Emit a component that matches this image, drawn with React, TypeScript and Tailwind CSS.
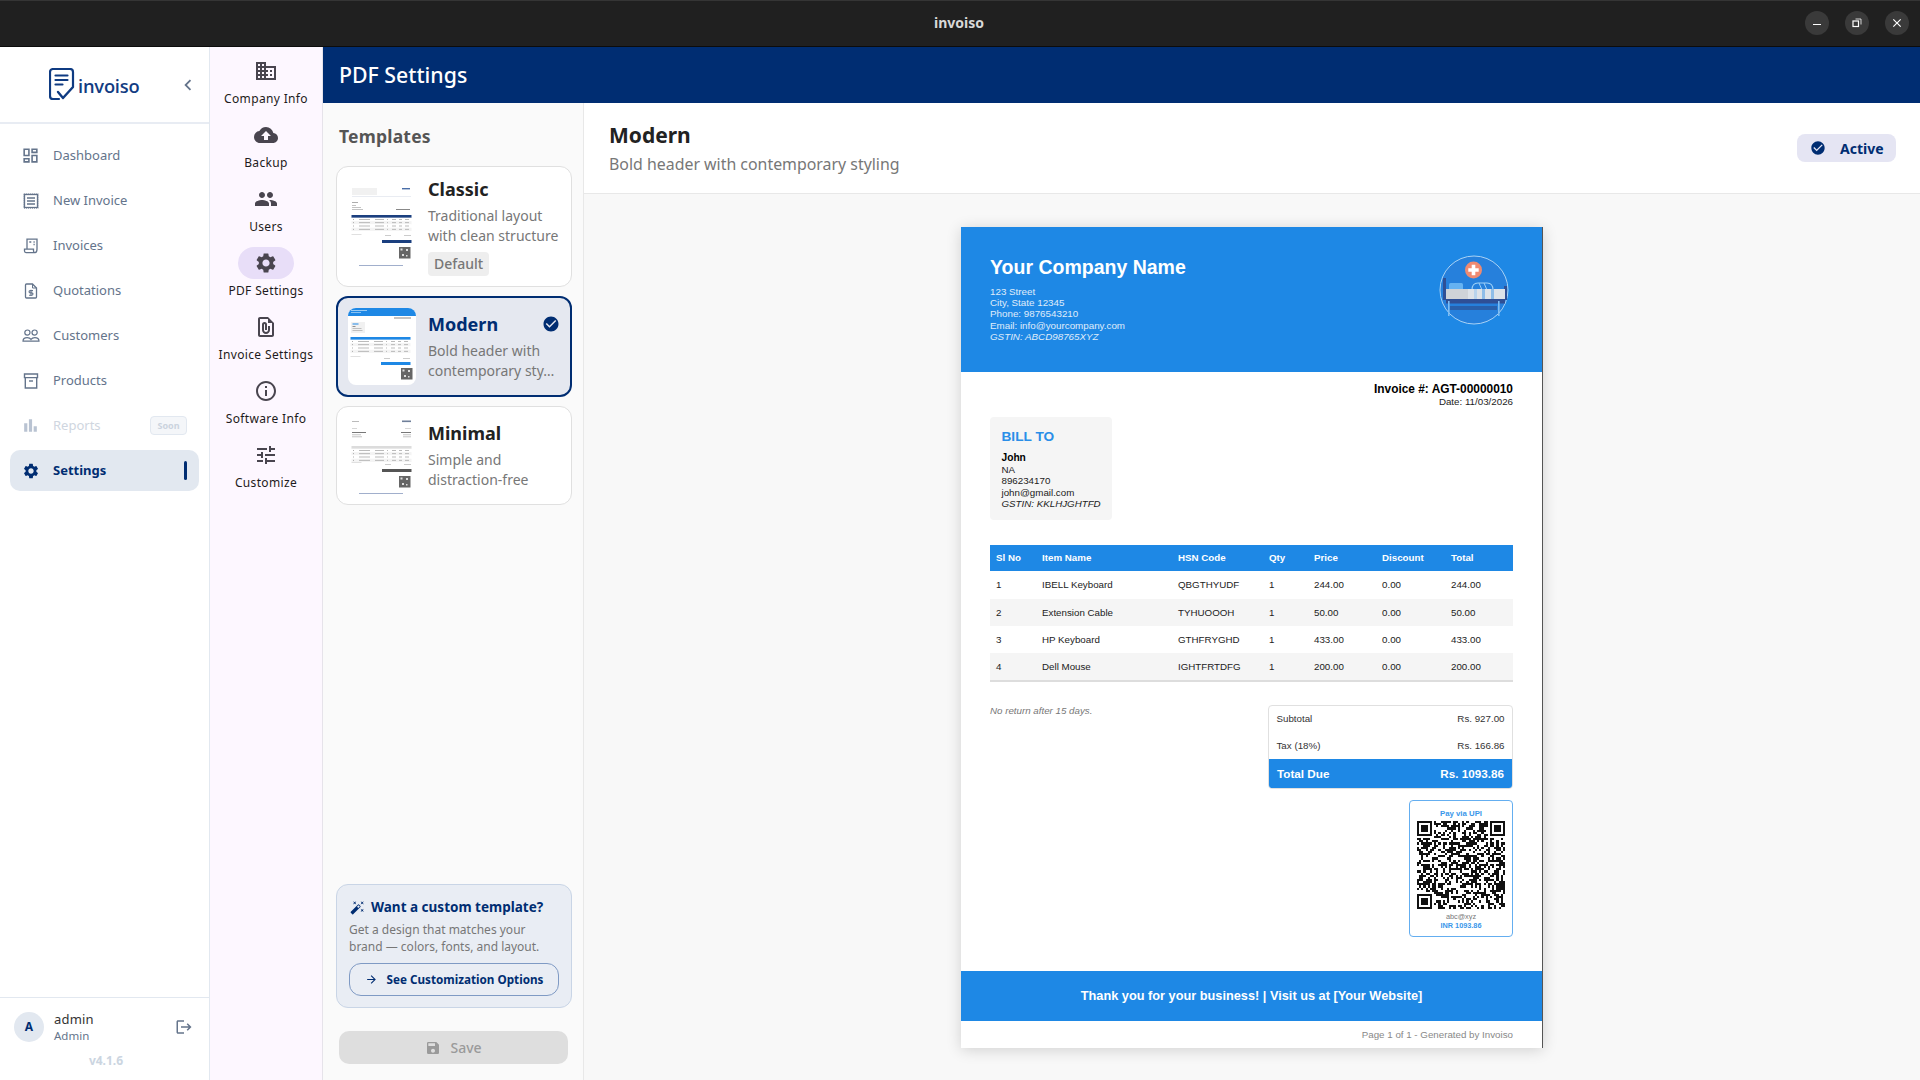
import React from "react";
import {
  MdOutlineDashboard, MdBarChart, MdSettings, MdBusiness, MdCloudUpload, MdPeople,
  MdOutlineFilePresent, MdInfoOutline, MdTune, MdCheckCircle, MdAutoFixHigh, MdSave, MdLogout, MdChevronLeft,
  MdArrowForward, MdClose,
} from "react-icons/md";

const ui = { fontFamily: '"Noto Sans", sans-serif' };
const pdf = { fontFamily: '"Liberation Sans", Arial, sans-serif' };

function IconNewInvoice() {
  return (
    <svg width="16" height="16" viewBox="0 0 16 16" fill="none" stroke="currentColor">
      <rect x="1.5" y="1.5" width="13" height="13" strokeWidth="1.3" />
      <rect x="0.8" y="0.8" width="14.4" height="14.4" strokeWidth="0.8" strokeDasharray="1 1" />
      <path d="M4 5h8M4 8h8M4 11h8" strokeWidth="1.3" />
    </svg>
  );
}
function IconInvoices() {
  return (
    <svg width="16" height="16" viewBox="0 0 16 16" fill="none" stroke="currentColor" strokeWidth="1.3">
      <path d="M4 11V1.2h10V11" />
      <path d="M1.5 11.2h9v1.8a1.6 1.6 0 0 0 1.6 1.6H3a1.6 1.6 0 0 1-1.5-1.6z" />
      <path d="M14 11c0 2.2-.6 3.6-2 3.6" />
      <path d="M6.3 4h2M10.5 4h1.2M10.5 6.5h1.2" />
    </svg>
  );
}
function IconQuote() {
  return (
    <svg width="16" height="16" viewBox="0 0 16 16" fill="none" stroke="currentColor" strokeWidth="1.3">
      <path d="M2.5 2a1 1 0 0 1 1-1h6l4 4v9a1 1 0 0 1-1 1h-9a1 1 0 0 1-1-1z" />
      <path d="M9.5 1v4h4" strokeWidth="1" />
      <path d="M10 7.6H7.2a1.1 1.1 0 0 0 0 2.3h1.6a1.1 1.1 0 0 1 0 2.3H6M8 6.8v6.2" strokeWidth="1.1" />
    </svg>
  );
}
function IconCustomers() {
  return (
    <svg width="18" height="16" viewBox="0 0 18 16" fill="none" stroke="currentColor" strokeWidth="1.2">
      <circle cx="5.4" cy="4.6" r="2.6" />
      <circle cx="12.6" cy="4.6" r="2.6" />
      <path d="M1 13.2c0-2.4 2-3.6 4.2-3.6 1.5 0 3 .6 3.8 1.8.8-1.2 2.3-1.8 3.8-1.8 2.2 0 4.2 1.2 4.2 3.6z" />
    </svg>
  );
}
function IconProducts() {
  return (
    <svg width="16" height="16" viewBox="0 0 16 16" fill="none" stroke="currentColor" strokeWidth="1.4">
      <path d="M1.5 1h13v3.6h-13z" />
      <path d="M2.3 4.6V15h11.4V4.6" />
      <path d="M6 8h4" />
    </svg>
  );
}
function Logo() {
  return (
    <svg width="26" height="33" viewBox="0 0 26 33" fill="none" stroke="#0f3b82" strokeWidth="2.2" strokeLinecap="round" strokeLinejoin="round">
      <path d="M10 31H4a3 3 0 0 1-3-3V4a3 3 0 0 1 3-3h17a3 3 0 0 1 3 3v14" />
      <path d="M6.5 7.5h12M6.5 12h12M6.5 16.5h7" />
      <path d="M9 24l5 6 10-11" strokeWidth="2.4" />
    </svg>
  );
}

const navItems: { label: string; icon: React.ReactNode }[] = [
  { label: "Dashboard", icon: <MdOutlineDashboard size={19} /> },
  { label: "New Invoice", icon: <IconNewInvoice /> },
  { label: "Invoices", icon: <IconInvoices /> },
  { label: "Quotations", icon: <IconQuote /> },
  { label: "Customers", icon: <IconCustomers /> },
  { label: "Products", icon: <IconProducts /> },
];

function Sidebar() {
  return (
    <aside className="w-[210px] shrink-0 bg-white border-r border-[#e2e8f0] flex flex-col h-full">
      <div className="h-[77px] shrink-0 border-b-2 border-[#e8ecf3] flex items-center pl-[49px] pr-[10px]">
        <Logo />
        <span className="ml-[3px] text-[18.3px] font-semibold tracking-[-0.2px] text-[#123c82] leading-none mt-[3px]" style={{ fontFamily: '"Open Sans", sans-serif' }}>invoiso</span>
        <MdChevronLeft size={22} className="ml-auto text-[#64748b]" />
      </div>
      <nav className="flex flex-col gap-[4px] pt-[11px] px-[10px]">
        {navItems.map((n) => (
          <div key={n.label} className="h-[41px] flex items-center text-[#64748b]">
            <span className="w-[43px] flex justify-center pr-[2px] text-[#64748b]">{n.icon}</span>
            <span className="text-[13px]">{n.label}</span>
          </div>
        ))}
        <div className="h-[41px] flex items-center text-[#64748b]">
          <span className="w-[43px] flex justify-center pr-[2px] text-[#b9c3d2]"><MdBarChart size={19} /></span>
          <span className="text-[13px] text-[#cfd6e0]">Reports</span>
          <span className="ml-auto mr-[12px] w-[37px] h-[19px] rounded-[4px] border border-[#e2e8f0] bg-[#f4f6f9] text-[#cbd3de] text-[9px] font-bold flex items-center justify-center">Soon</span>
        </div>
        <div className="h-[41px] flex items-center rounded-[10px] bg-[#e2e8f0] text-[#002d72]">
          <span className="w-[43px] flex justify-center pr-[2px]"><MdSettings size={18} /></span>
          <span className="text-[13px] font-bold">Settings</span>
          <span className="ml-auto mr-[12px] w-[3px] h-[19px] rounded-full bg-[#002d72]" />
        </div>
      </nav>
      <div className="mt-auto border-t border-[#e2e8f0] h-[83px] shrink-0 flex flex-col">
        <div className="flex items-center pt-[12px] pl-[14px] pr-[16px]">
          <span className="w-[30px] h-[30px] rounded-full bg-[#e2e8f0] flex items-center justify-center text-[#002d72] text-[12px] font-bold">A</span>
          <div className="ml-[10px] flex flex-col">
            <span className="text-[13px] leading-[18px] text-[#333] tracking-[0.2px]">admin</span>
            <span className="text-[11.5px] leading-[16px] text-[#64748b]">Admin</span>
          </div>
          <MdLogout size={18} className="ml-auto text-[#64748b]" />
        </div>
        <div className="text-center text-[12px] font-bold text-[#cbd5e1] pt-[8px] pl-[3px]">v4.1.6</div>
      </div>
    </aside>
  );
}

const railItems: { label: string; icon: React.ReactNode; active?: boolean }[] = [
  { label: "Company Info", icon: <MdBusiness size={24} /> },
  { label: "Backup", icon: <MdCloudUpload size={24} /> },
  { label: "Users", icon: <MdPeople size={24} /> },
  { label: "PDF Settings", icon: <MdSettings size={24} />, active: true },
  { label: "Invoice Settings", icon: <MdOutlineFilePresent size={24} /> },
  { label: "Software Info", icon: <MdInfoOutline size={24} /> },
  { label: "Customize", icon: <MdTune size={24} /> },
];

function Rail() {
  return (
    <div className="w-[113px] shrink-0 h-full bg-[#fdf7ff] border-r border-[#e6e3ea] flex flex-col items-center pt-[8px]">
      {railItems.map((r) => (
        <div key={r.label} className="h-[64px] w-full flex flex-col items-center shrink-0">
          <span className={`w-[56px] h-[32px] shrink-0 rounded-full flex items-center justify-center text-[#49454f] ${r.active ? "bg-[#e8def8]" : ""}`}>{r.icon}</span>
          <span className="text-[12px] leading-[16px] mt-[4px] tracking-[0.35px] text-[#1d1b20] whitespace-nowrap">{r.label}</span>
        </div>
      ))}
    </div>
  );
}

type Variant = "classic" | "modern" | "minimal";

function Thumb({ variant }: { variant: Variant }) {
  const cfg = {
    classic: { h: 87, accent: "#1b3f7f", head: "#1b3f7f", table: 32, note: 51, tot: 52, bar: 57, qr: 64, qrx: 50, foot: 82 },
    modern: { h: 77, accent: "#1e88e5", head: "#1e88e5", table: 29, note: 48, tot: 50, bar: 54, qr: 60, qrx: 53, foot: 0 },
    minimal: { h: 84, accent: "#555", head: "#dcdcdc", table: 32, note: 48, tot: 50, bar: 55, qr: 62, qrx: 50, foot: 79 },
  }[variant];
  const rows = [0, 1, 2, 3];
  return (
    <svg width="68" height={cfg.h} viewBox={`0 0 68 ${cfg.h}`} className="block shrink-0">
      {variant === "modern" && (
        <>
          <rect x="0" y="0" width="68" height="8" fill="#1e88e5" />
          <rect x="3" y="2" width="16" height="0.8" fill="#b8dcf8" />
          <rect x="3" y="4" width="10" height="0.7" fill="#b8dcf8" />
          <rect x="46" y="9.5" width="17" height="1" fill="#888" />
          <rect x="3" y="14" width="14" height="11" fill="#f1f1f1" />
          <rect x="4.5" y="15.5" width="6" height="1" fill="#1e88e5" />
          <rect x="4.5" y="18" width="3" height="0.7" fill="#666" />
          <rect x="4.5" y="20" width="9" height="0.7" fill="#aaa" />
          <rect x="4.5" y="22" width="10" height="0.7" fill="#aaa" />
        </>
      )}
      {variant === "classic" && (
        <>
          <rect x="3" y="5" width="25" height="7" fill="#f1f1f1" />
          <rect x="53" y="5" width="8" height="1.4" fill="#4a6ea8" />
          <rect x="3" y="13" width="59" height="0.5" fill="#d3d9e4" />
          <rect x="47" y="26" width="14" height="1" fill="#888" />
          <rect x="3" y="19" width="6" height="0.7" fill="#888" />
          <rect x="3" y="22" width="4" height="0.7" fill="#aaa" />
          <rect x="3" y="24" width="9" height="0.7" fill="#aaa" />
          <rect x="3" y="26" width="11" height="0.7" fill="#aaa" />
        </>
      )}
      {variant === "minimal" && (
        <>
          <rect x="3" y="7" width="7" height="0.8" fill="#aaa" />
          <rect x="53" y="6.5" width="9" height="1.6" fill="#6f7f99" />
          <rect x="3" y="14" width="5" height="0.6" fill="#bbb" />
          <rect x="56" y="14" width="6" height="0.6" fill="#bbb" />
          <rect x="3" y="18" width="14" height="1" fill="#777" />
          <rect x="3" y="20.5" width="9" height="0.7" fill="#aaa" />
          <rect x="3" y="22.5" width="10" height="0.7" fill="#aaa" />
          <rect x="52" y="18" width="10" height="1" fill="#777" />
          <rect x="54" y="20.5" width="8" height="0.7" fill="#aaa" />
          <rect x="54" y="22.5" width="8" height="0.7" fill="#aaa" />
        </>
      )}
      <rect x="2.5" y={cfg.table} width="60" height="2.8" fill={cfg.head} />
      {rows.map((r) => {
        const y = cfg.table + 2.8 + r * 3.3;
        return (
          <g key={r}>
            <rect x="2.5" y={y} width="60" height="3.3" fill={r % 2 ? "#f4f4f4" : "#fff"} />
            <rect x="4" y={y + 1.2} width="1" height="0.8" fill="#999" />
            <rect x="10" y={y + 1.2} width="11" height="0.8" fill="#aaa" />
            <rect x="26" y={y + 1.2} width="9" height="0.8" fill="#aaa" />
            <rect x="38" y={y + 1.2} width="1" height="0.8" fill="#aaa" />
            <rect x="43" y={y + 1.2} width="4" height="0.8" fill="#aaa" />
            <rect x="50" y={y + 1.2} width="3" height="0.8" fill="#aaa" />
            <rect x="56" y={y + 1.2} width="4" height="0.8" fill="#aaa" />
          </g>
        );
      })}
      <rect x="2.5" y={cfg.note} width="10" height="0.6" fill="#ccc" />
      <rect x="36" y={cfg.tot} width="6" height="0.6" fill="#aaa" />
      <rect x="55" y={cfg.tot} width="7" height="0.6" fill="#aaa" />
      <rect x="33" y={cfg.bar} width="29.5" height="3" fill={cfg.accent} />
      <rect x={cfg.qrx} y={cfg.qr} width="11.5" height="11.5" fill="#666" />
      <rect x={cfg.qrx + 1.5} y={cfg.qr + 1.5} width="2" height="2" fill="#ddd" />
      <rect x={cfg.qrx + 7} y={cfg.qr + 2} width="2" height="2" fill="#ddd" />
      <rect x={cfg.qrx + 3} y={cfg.qr + 7} width="2" height="2" fill="#ddd" />
      <rect x={cfg.qrx + 7} y={cfg.qr + 8} width="1.5" height="1.5" fill="#ddd" />
      {cfg.foot > 0 && <rect x="10" y={cfg.foot} width="44" height="0.8" fill="#8a9cc0" />}
    </svg>
  );
}

function TemplateCard({ title, l1, l2, variant, selected, def }: { title: string; l1: string; l2: string; variant: Variant; selected?: boolean; def?: boolean }) {
  return (
    <div className={`rounded-[12px] flex items-center ${selected ? "h-[101px] border-2 border-[#002d72] bg-[#e5e8f0] pl-[10px] pr-[10px]" : "border border-[#e0e0e0] bg-white pl-[12px] pr-[9px]"} ${def ? "h-[121px]" : ""} ${variant === "minimal" ? "h-[99px]" : ""}`}>
      <div className={`shrink-0 overflow-hidden bg-white ${selected ? "rounded-[8px]" : ""}`}><Thumb variant={variant} /></div>
      <div className={`flex-1 min-w-0 flex flex-col ${selected ? "ml-[12px]" : "ml-[11px]"}`}>
        <div className="flex items-center justify-between">
          <span className={`text-[18px] leading-[24px] font-bold ${selected ? "text-[#002d72]" : "text-[#222]"}`}>{title}</span>
          {selected && <MdCheckCircle size={18} className="text-[#002d72]" />}
        </div>
        <span className="text-[14px] leading-[20px] text-[#777] mt-[5px] whitespace-nowrap">{l1}</span>
        <span className="text-[14px] leading-[20px] text-[#777] whitespace-nowrap">{l2}</span>
        {def && <span className="self-start mt-[6px] h-[24px] px-[6px] rounded-[4px] bg-[#eeeeee] text-[14px] leading-[24px] font-medium text-[#777]">Default</span>}
      </div>
    </div>
  );
}

function TemplatesPanel() {
  return (
    <div className="w-[261px] shrink-0 h-full bg-[#fafafa] border-r border-[#e8e8e8] flex flex-col pl-[13px] pr-[11px]">
      <div className="pt-[21px] pl-[3px] h-[63px] text-[17.5px] leading-[24px] font-bold text-[#555] tracking-[0.2px]">Templates</div>
      <div className="flex flex-col gap-[9px]">
        <TemplateCard title="Classic" l1="Traditional layout" l2="with clean structure" variant="classic" def />
        <TemplateCard title="Modern" l1="Bold header with" l2="contemporary sty…" variant="modern" selected />
        <TemplateCard title="Minimal" l1="Simple and" l2="distraction-free" variant="minimal" />
      </div>
      <div className="mt-auto rounded-[12px] border border-[#c9d5e6] bg-[#e9edf4] h-[124px] px-[12px] pt-[12px]">
        <div className="flex items-center gap-[6px] pl-[1px] text-[#002d72]">
          <MdAutoFixHigh size={15} />
          <span className="text-[13.5px] leading-[20px] font-bold">Want a custom template?</span>
        </div>
        <div className="text-[12px] leading-[17px] text-[#777] mt-[4px]">Get a design that matches your<br />brand — colors, fonts, and layout.</div>
        <button className="mt-[8px] w-full h-[33px] rounded-[12px] border border-[#7f9ac4] flex items-center justify-center gap-[9px] text-[#002d72]">
          <MdArrowForward size={13} />
          <span className="text-[11.7px] font-bold">See Customization Options</span>
        </button>
      </div>
      <div className="mt-[23px] mb-[16px] ml-[3px] mr-[4px] h-[33px] rounded-[10px] bg-[#dedede] flex items-center justify-center gap-[9px] text-[#9a9a9a]">
        <MdSave size={16} />
        <span className="text-[14px] font-medium">Save</span>
      </div>
    </div>
  );
}

function BedLogo() {
  return (
    <svg width="70" height="70" viewBox="0 0 70 70" className="block">
      <circle cx="35" cy="35" r="34" fill="#2680dc" stroke="#a9d2f5" strokeWidth="1" />
      <circle cx="34.5" cy="15" r="8.5" fill="#ef8a71" />
      <path d="M32.7 9.8h3.6v3.4h3.4v3.6h-3.4v3.4h-3.6v-3.4h-3.4v-3.6h3.4z" fill="#fff" />
      <rect x="4" y="23" width="3" height="22" fill="#2f4f95" />
      <rect x="65" y="31" width="3" height="14" fill="#2f4f95" />
      <rect x="10" y="28" width="14" height="7" rx="1.5" fill="#66b2f2" />
      <path d="M33 35c0-5 3-7 6-7h9c3 0 6 2 6 7" fill="none" stroke="#9dd0f7" strokeWidth="1.1" />
      <path d="M40 28l3 7M45 28l3 7" stroke="#9dd0f7" strokeWidth="1" />
      <rect x="7" y="34" width="59" height="10" fill="#dde2e8" />
      <rect x="7" y="34" width="22" height="10" fill="#cfd3d8" />
      <rect x="35" y="34" width="3" height="10" fill="#b8d3ec" />
      <rect x="43" y="34" width="3" height="10" fill="#8fbde8" />
      <rect x="52" y="34" width="3" height="10" fill="#8fbde8" />
      <rect x="7" y="44" width="59" height="4.5" fill="#2f4f95" />
      <rect x="11" y="51" width="47" height="4" fill="#2960ab" />
      <rect x="9" y="46" width="1.6" height="15" fill="#7fbdf2" />
      <rect x="59" y="46" width="1.6" height="15" fill="#7fbdf2" />
    </svg>
  );
}

function QR() {
  const N = 41;
  const cells: React.ReactNode[] = [];
  let seed = 91231;
  const rnd = () => {
    seed = (seed * 1103515245 + 12345) & 0x7fffffff;
    return (seed >> 12) % 100;
  };
  const inFinder = (x: number, y: number) => (x < 8 && y < 8) || (x >= N - 8 && y < 8) || (x < 8 && y >= N - 8);
  for (let y = 0; y < N; y++) {
    for (let x = 0; x < N; x++) {
      if (inFinder(x, y)) { rnd(); continue; }
      if (rnd() < 52) cells.push(<rect key={`${x}-${y}`} x={x} y={y} width="1" height="1" />);
    }
  }
  const finder = (fx: number, fy: number) => (
    <g key={`f${fx}${fy}`}>
      <path d={`M${fx} ${fy}h7v7h-7z M${fx + 1} ${fy + 1}v5h5v-5z`} fillRule="evenodd" />
      <rect x={fx + 2} y={fy + 2} width="3" height="3" />
    </g>
  );
  return (
    <svg width="88" height="88" viewBox={`0 0 ${N} ${N}`} fill="#111" shapeRendering="crispEdges" className="block shrink-0">
      {cells}
      {finder(0, 0)}
      {finder(N - 7, 0)}
      {finder(0, N - 7)}
    </svg>
  );
}

const tableRows = [
  ["1", "IBELL Keyboard", "QBGTHYUDF", "1", "244.00", "0.00", "244.00", "h-[28px]"],
  ["2", "Extension Cable", "TYHUOOOH", "1", "50.00", "0.00", "50.00", "h-[27px] bg-[#f5f5f5]"],
  ["3", "HP Keyboard", "GTHFRYGHD", "1", "433.00", "0.00", "433.00", "h-[27px]"],
  ["4", "Dell Mouse", "IGHTFRTDFG", "1", "200.00", "0.00", "200.00", "h-[27px] bg-[#f5f5f5]"],
];
const grid = "grid grid-cols-[46px_136px_91px_45px_68px_69px_68px] items-center";

function Invoice() {
  return (
    <div className="w-[582px] h-[821px] shrink-0 bg-white shadow-[0_2px_14px_rgba(0,0,0,0.16)] border-r border-[#555] flex flex-col text-[9.76px] text-[#333] leading-[11.3px]" style={pdf}>
      <div className="h-[145px] shrink-0 bg-[#1e88e5] pl-[29px] pr-[33px] pt-[29px] flex justify-between text-white">
        <div>
          <div className="text-[19.5px] leading-[23px] font-bold">Your Company Name</div>
          <div className="mt-[7px] opacity-85 leading-[11.2px] text-[9.8px]">
            <div>123 Street</div>
            <div>City, State 12345</div>
            <div>Phone: 9876543210</div>
            <div>Email: info@yourcompany.com</div>
            <div className="italic">GSTIN: ABCD98765XYZ</div>
          </div>
        </div>
        <div className="-mt-[1px]"><BedLogo /></div>
      </div>
      <div className="px-[29px] flex-1 flex flex-col">
        <div className="text-right pt-[10px] h-[45px]">
          <div className="text-[11.9px] leading-[14px] font-bold text-black">Invoice #: AGT-00000010</div>
          <div className="text-[9.76px] leading-[11px] text-[#222]">Date: 11/03/2026</div>
        </div>
        <div className="w-[122px] h-[103px] bg-[#f5f5f5] rounded-[4px] pl-[11.5px] pt-[12px]">
          <div className="text-[13.66px] leading-[16px] font-bold text-[#2a8ee8]">BILL TO</div>
          <div className="mt-[7px] text-[9.76px] leading-[11.6px] text-[#222]">
            <div className="font-bold text-black text-[10.2px]">John</div>
            <div>NA</div>
            <div>896234170</div>
            <div>john@gmail.com</div>
            <div className="italic">GSTIN: KKLHJGHTFD</div>
          </div>
        </div>
        <div className="mt-[25px]">
          <div className={`${grid} h-[26px] bg-[#1e88e5] text-white font-bold`}>
            {["Sl No", "Item Name", "HSN Code", "Qty", "Price", "Discount", "Total"].map((h) => (
              <span key={h} className="pl-[6px]">{h}</span>
            ))}
          </div>
          {tableRows.map((r) => (
            <div key={r[0]} className={`${grid} ${r[7]} text-[#222]`}>
              {r.slice(0, 7).map((c, i) => (
                <span key={i} className="pl-[6px]">{c}</span>
              ))}
            </div>
          ))}
          <div className="h-[2px] bg-[#ddd]" />
        </div>
        <div className="mt-[23px] flex justify-between items-start">
          <div className="italic text-[#777] text-[9.76px]">No return after 15 days.</div>
          <div className="w-[245px] h-[84px] rounded-[4px] border border-[#e0e0e0] flex flex-col overflow-hidden text-[#333]">
            <div className="h-[25px] flex items-center justify-between px-[7.5px]"><span>Subtotal</span><span>Rs. 927.00</span></div>
            <div className="h-[28px] flex items-center justify-between px-[7.5px] pt-[1px]"><span>Tax (18%)</span><span>Rs. 166.86</span></div>
            <div className="flex-1 bg-[#1e88e5] text-white font-bold text-[11.7px] flex items-center justify-between px-[8px]"><span>Total Due</span><span>Rs. 1093.86</span></div>
          </div>
        </div>
        <div className="mt-[11px] self-end w-[104px] h-[137px] rounded-[4px] border border-[#64aef0] flex flex-col items-center">
          <div className="text-[7.8px] leading-[9px] font-bold text-[#3a97ea] pt-[8px] h-[20px]">Pay via UPI</div>
          <QR />
          <div className="text-[7.3px] leading-[9px] text-[#777] mt-[3px]">abc@xyz</div>
          <div className="text-[7.3px] leading-[9px] font-bold text-[#3a97ea]">INR 1093.86</div>
        </div>
      </div>
      <div className="h-[50px] shrink-0 bg-[#1e88e5] flex items-center justify-center text-white font-bold text-[12.75px]">Thank you for your business! | Visit us at [Your Website]</div>
      <div className="h-[27px] shrink-0 flex items-center justify-end pr-[29px] text-[9.76px] text-[#888]">Page 1 of 1 - Generated by Invoiso</div>
    </div>
  );
}

function Content() {
  return (
    <div className="flex-1 min-w-0 h-full flex flex-col bg-[#f8f8f8]">
      <div className="h-[91px] shrink-0 bg-white border-b border-[#e8e8e8] pl-[25px] pr-[24px] flex items-center justify-between">
        <div className="flex flex-col">
          <span className="text-[21px] leading-[28px] font-bold text-[#222]">Modern</span>
          <span className="text-[15.9px] leading-[22px] mt-[4px] text-[#777]">Bold header with contemporary styling</span>
        </div>
        <div className="w-[99px] h-[28px] rounded-[8px] bg-[#e5e5f3] flex items-center pl-[13px] gap-[14px] text-[#002d72]">
          <MdCheckCircle size={16} />
          <span className="text-[14px] font-bold">Active</span>
        </div>
      </div>
      <div className="flex-1 flex justify-center pt-[33px] overflow-hidden">
        <Invoice />
      </div>
    </div>
  );
}

export default function App() {
  return (
    <div className="w-[1920px] h-[1080px] overflow-hidden flex flex-col bg-white" style={ui}>
      <div className="h-[47px] shrink-0 bg-[#202020] border-t border-[#353535] border-b border-b-[#0c0c0c] flex items-center relative">
        <span className="flex-1 text-center text-[14px] font-bold text-[#d8d8d8] pr-[2px] pb-[2px]">invoiso</span>
        <div className="absolute right-[11px] top-[10px] flex gap-[16px] text-white">
          <span className="w-[24px] h-[24px] rounded-full bg-[#3a3a3a] flex items-center justify-center"><span className="w-[8px] h-[1.5px] bg-white mt-[3px]" /></span>
          <span className="w-[24px] h-[24px] rounded-full bg-[#3a3a3a] flex items-center justify-center">
            <svg width="10" height="10" viewBox="0 0 10 10" fill="none" stroke="#fff"><rect x="1" y="3" width="5.5" height="5.5" strokeWidth="1.2" /><path d="M3.5 1h5.5v5.5" strokeWidth="0.8" /></svg>
          </span>
          <span className="w-[24px] h-[24px] rounded-full bg-[#3a3a3a] flex items-center justify-center"><MdClose size={14} /></span>
        </div>
      </div>
      <div className="flex-1 min-h-0 flex">
        <Sidebar />
        <Rail />
        <div className="flex-1 min-w-0 h-full flex flex-col">
          <div className="h-[56px] shrink-0 bg-[#002d72] flex items-center pl-[16px] text-white text-[21.3px] font-medium">PDF Settings</div>
          <div className="flex-1 min-h-0 flex">
            <TemplatesPanel />
            <Content />
          </div>
        </div>
      </div>
    </div>
  );
}
